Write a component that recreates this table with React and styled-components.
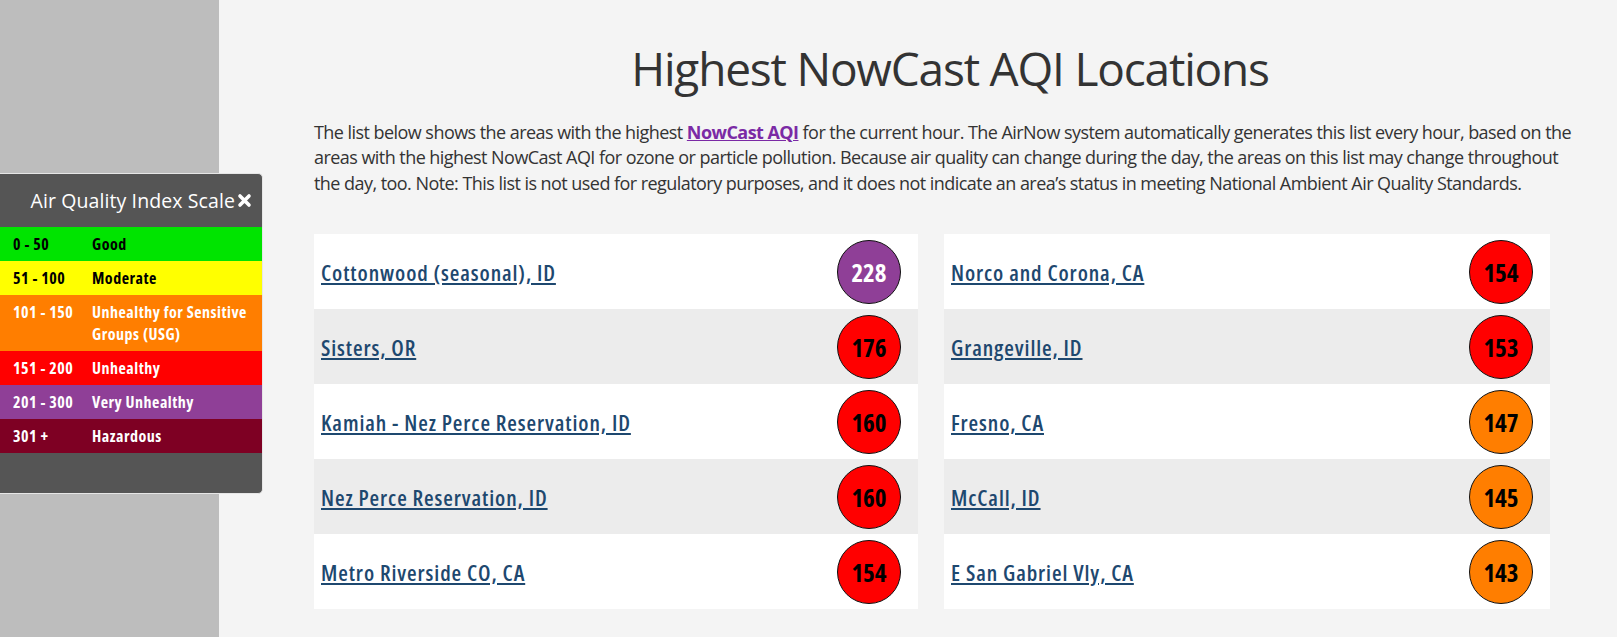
import React from 'react';
import styled, { createGlobalStyle } from 'styled-components';

const AQI_COLORS = {
  good: '#00e400',
  moderate: '#ffff00',
  usg: '#ff7e00',
  unhealthy: '#ff0000',
  veryUnhealthy: '#8f3f97',
  hazardous: '#7e0023',
};

const GlobalStyle = createGlobalStyle`
  body {
    margin: 0;
    background: #f4f4f4;
    font-family: "Open Sans", "Noto Sans", sans-serif;
    color: #333;
  }
`;

const Page = styled.div`
  position: relative;
  display: flex;
  min-height: 637px;
`;

const Sidebar = styled.aside`
  flex: none;
  width: 219px;
  background: #bdbdbd;
`;

const Main = styled.main`
  flex: 1;
  padding: 43px 31px 0 95px;
`;

const Title = styled.h1`
  margin: 0 0 26px;
  font-size: 46px;
  line-height: 50.6px;
  font-weight: 400;
  letter-spacing: -1.2px;
  text-align: center;
  color: #333;
`;

const Intro = styled.p`
  max-width: 1262px;
  margin: 0 0 38px;
  font-size: 18px;
  line-height: 25.5px;
  letter-spacing: -0.55px;
  color: #333;

  a {
    color: #7b2aa5;
    font-weight: 700;
    text-decoration: underline;
  }
`;

const Table = styled.div`
  display: grid;
  grid-template-columns: 604px 606px;
  column-gap: 26px;
`;

const Column = styled.div`
  display: flex;
  flex-direction: column;
`;

const Row = styled.div`
  display: flex;
  align-items: center;
  justify-content: space-between;
  height: 75px;
  padding: 0 17px 0 7px;
  background: ${props => (props.$alt ? '#ececec' : '#ffffff')};
`;

const Place = styled.a`
  color: #1e486f;
  font-size: 22px;
  font-weight: 600;
  font-stretch: 75%;
  letter-spacing: 0.9px;
  text-decoration: underline;
`;

const Badge = styled.div`
  display: flex;
  align-items: center;
  justify-content: center;
  width: 62px;
  height: 62px;
  border: 1px solid #111;
  border-radius: 50%;
  background: ${props => props.$bg};
  color: ${props => props.$fg};
  font-size: 25px;
  font-weight: 700;
  font-stretch: 75%;
`;

const Legend = styled.div`
  position: absolute;
  top: 173px;
  left: 0;
  width: 262px;
  background: #555;
  border: 1px solid #e6e6e6;
  border-left: none;
  border-radius: 0 5px 5px 0;
  padding-bottom: 40px;
`;

const LegendHeader = styled.div`
  display: flex;
  align-items: center;
  justify-content: flex-end;
  gap: 2px;
  height: 53px;
  padding-right: 10px;
  color: #fff;
  font-size: 19.5px;
  letter-spacing: 0.1px;
`;

const LegendRow = styled.div`
  display: grid;
  grid-template-columns: 79px 162px;
  padding: 6px 0 6px 13px;
  background: ${props => props.$bg};
  color: ${props => props.$fg};
  font-size: 16px;
  line-height: 22px;
  font-weight: 700;
  font-stretch: 75%;
  letter-spacing: 0.5px;
`;

const CloseIcon = () => (
  <svg width="15" height="15" viewBox="0 0 15 15" aria-hidden="true">
    <path d="M3 3 L12 12 M12 3 L3 12" stroke="#fff" strokeWidth="3.6" strokeLinecap="round" />
  </svg>
);

const scale = [
  { range: '0 - 50', label: 'Good', bg: AQI_COLORS.good, fg: '#000' },
  { range: '51 - 100', label: 'Moderate', bg: AQI_COLORS.moderate, fg: '#000' },
  { range: '101 - 150', label: 'Unhealthy for Sensitive Groups (USG)', bg: AQI_COLORS.usg, fg: '#fff' },
  { range: '151 - 200', label: 'Unhealthy', bg: AQI_COLORS.unhealthy, fg: '#fff' },
  { range: '201 - 300', label: 'Very Unhealthy', bg: AQI_COLORS.veryUnhealthy, fg: '#fff' },
  { range: '301 +', label: 'Hazardous', bg: AQI_COLORS.hazardous, fg: '#fff' },
];

const leftList = [
  ['Cottonwood (seasonal), ID', 228],
  ['Sisters, OR', 176],
  ['Kamiah - Nez Perce Reservation, ID', 160],
  ['Nez Perce Reservation, ID', 160],
  ['Metro Riverside CO, CA', 154],
];

const rightList = [
  ['Norco and Corona, CA', 154],
  ['Grangeville, ID', 153],
  ['Fresno, CA', 147],
  ['McCall, ID', 145],
  ['E San Gabriel Vly, CA', 143],
];

const badgeColors = (aqi) => {
  if (aqi > 300) return [AQI_COLORS.hazardous, '#fff'];
  if (aqi > 200) return [AQI_COLORS.veryUnhealthy, '#fff'];
  if (aqi > 150) return [AQI_COLORS.unhealthy, '#000'];
  if (aqi > 100) return [AQI_COLORS.usg, '#000'];
  if (aqi > 50) return [AQI_COLORS.moderate, '#000'];
  return [AQI_COLORS.good, '#000'];
};

const LocationColumn = ({ items }) => (
  <Column>
    {items.map(([name, aqi], i) => {
      const [bg, fg] = badgeColors(aqi);
      return (
        <Row key={name} $alt={i % 2 === 1}>
          <Place href="#">{name}</Place>
          <Badge $bg={bg} $fg={fg}>{aqi}</Badge>
        </Row>
      );
    })}
  </Column>
);

export default function App() {
  return (
    <Page>
      <GlobalStyle />
      <Sidebar />
      <Main>
        <Title>Highest NowCast AQI Locations</Title>
        <Intro>
          The list below shows the areas with the highest <a href="#">NowCast AQI</a> for the current hour.
          The AirNow system automatically generates this list every hour, based on the areas with the highest
          NowCast AQI for ozone or particle pollution. Because air quality can change during the day, the areas
          on this list may change throughout the day, too. Note: This list is not used for regulatory purposes,
          and it does not indicate an area’s status in meeting National Ambient Air Quality Standards.
        </Intro>
        <Table>
          <LocationColumn items={leftList} />
          <LocationColumn items={rightList} />
        </Table>
      </Main>
      <Legend>
        <LegendHeader>
          Air Quality Index Scale
          <CloseIcon />
        </LegendHeader>
        {scale.map(s => (
          <LegendRow key={s.range} $bg={s.bg} $fg={s.fg}>
            <span>{s.range}</span>
            <span>{s.label}</span>
          </LegendRow>
        ))}
      </Legend>
    </Page>
  );
}
